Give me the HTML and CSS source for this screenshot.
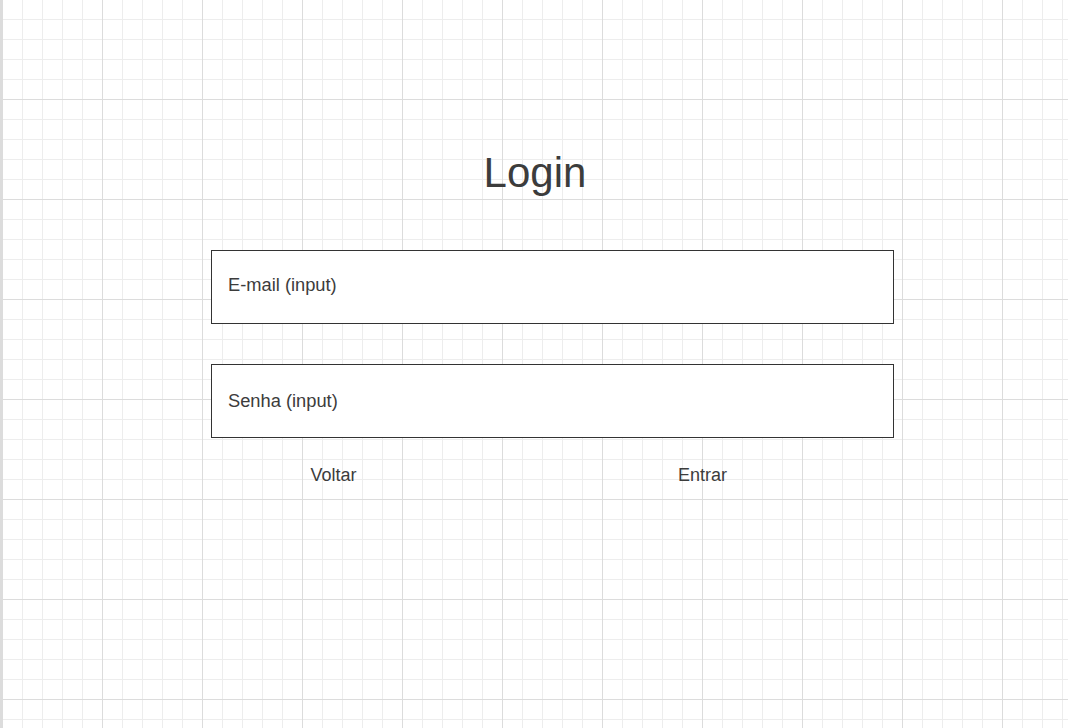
FILE: index.html
```html
<!DOCTYPE html>
<html lang="pt">
<head>
<meta charset="utf-8">
<title>Login</title>
<link rel="stylesheet" href="styles.css">
</head>
<body>
<div class="canvas">
  <h1 class="title">Login</h1>
  <form class="form">
    <div class="field field-email">E-mail (input)</div>
    <div class="field">Senha (input)</div>
    <div class="actions">
      <span class="action">Voltar</span>
      <span class="action">Entrar</span>
    </div>
  </form>
</div>
</body>
</html>
```
FILE: styles.css
```css
html, body {
  margin: 0;
  padding: 0;
  height: 100%;
}
body {
  border-left: 2px solid #dcdcdc;
  background: #fff;
  font-family: "Liberation Sans", Arial, sans-serif;
  color: #3c3c3c;
}
.canvas {
  box-sizing: border-box;
  min-height: 728px;
  padding-top: 148px;
  background-color: #fff;
  background-image:
    linear-gradient(to right, #dcdcdc 1px, transparent 1px),
    linear-gradient(to bottom, #dcdcdc 1px, transparent 1px),
    linear-gradient(to right, #ededed 1px, transparent 1px),
    linear-gradient(to bottom, #ededed 1px, transparent 1px);
  background-size: 100px 100px, 100px 100px, 20px 20px, 20px 20px;
  background-position: 0 0, 0 99px, 0 0, 0 19px;
}
.title {
  margin: 0;
  height: 50px;
  font-size: 42px;
  line-height: 50px;
  font-weight: normal;
  text-align: center;
}
.form {
  margin: 52px 0 0 209px;
  width: 683px;
  display: flex;
  flex-direction: column;
  gap: 40px;
}
.field {
  box-sizing: border-box;
  height: 74px;
  border: 1px solid #333;
  background: #fff;
  padding: 0 16px;
  font-size: 18.3px;
  line-height: 72px;
}
.field-email {
  line-height: 68px;
}
.actions {
  display: flex;
  gap: 124px;
  margin-top: -13px;
}
.action {
  width: 245px;
  text-align: center;
  font-size: 18px;
  line-height: 20px;
}
```
